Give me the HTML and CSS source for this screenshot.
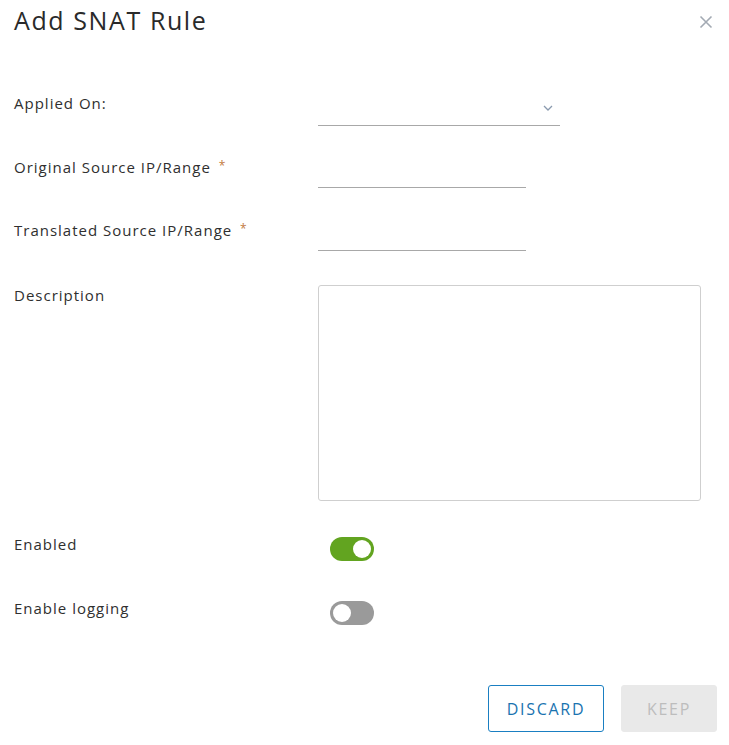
FILE: index.html
```html
<!DOCTYPE html>
<html lang="en">
<head>
<meta charset="utf-8">
<title>Add SNAT Rule</title>
<link rel="stylesheet" href="styles.css">
</head>
<body>
<div class="dialog">
  <div class="header">
    <h1 class="title">Add SNAT Rule</h1>
    <button class="close" aria-label="Close">
      <svg width="14" height="14" viewBox="0 0 14 14"><path d="M1.5 1.5 L12.5 12.5 M12.5 1.5 L1.5 12.5" stroke="#a3aab3" stroke-width="1.6" fill="none"/></svg>
    </button>
  </div>
  <form class="form">
    <div class="row row-select">
      <label class="label">Applied On:</label>
      <div class="field select">
        <svg class="chev" width="10" height="6" viewBox="0 0 10 6"><path d="M1 1 L5 5 L9 1" stroke="#8a9aae" stroke-width="1.3" fill="none"/></svg>
      </div>
    </div>
    <div class="row row-input">
      <label class="label">Original Source IP/Range <span class="req">*</span></label>
      <div class="field input"></div>
    </div>
    <div class="row row-input row-input2">
      <label class="label">Translated Source IP/Range <span class="req">*</span></label>
      <div class="field input"></div>
    </div>
    <div class="row row-desc">
      <label class="label">Description</label>
      <div class="textarea"></div>
    </div>
    <div class="row row-toggle">
      <label class="label">Enabled</label>
      <div class="toggle on"><span class="knob"></span></div>
    </div>
    <div class="row row-toggle row-toggle2">
      <label class="label">Enable logging</label>
      <div class="toggle"><span class="knob"></span></div>
    </div>
  </form>
  <div class="footer">
    <button class="btn btn-outline">DISCARD</button>
    <button class="btn btn-disabled">KEEP</button>
  </div>
</div>
</body>
</html>
```
FILE: styles.css
```css
* { box-sizing: border-box; }
html, body { margin: 0; padding: 0; background: #fff; }
body {
  font-family: "Open Sans", "Liberation Sans", sans-serif;
  color: #2f2f2f;
  width: 729px;
  height: 745px;
  overflow: hidden;
}
.dialog {
  padding: 0 12px 0 14px;
}
.header {
  display: flex;
  justify-content: space-between;
  align-items: flex-start;
  height: 95px;
}
.title {
  margin: 2px 0 0;
  font-size: 25px;
  font-weight: 400;
  line-height: 36px;
  color: #2a2a2a;
  letter-spacing: 1.6px;
}
.close {
  border: 0;
  background: none;
  padding: 0;
  margin: 15px 4px 0 0;
  width: 14px;
  height: 14px;
  display: flex;
}
.form {
  display: flex;
  flex-direction: column;
}
.row {
  display: grid;
  grid-template-columns: 304px auto;
  align-items: start;
}
.label {
  font-size: 15px;
  line-height: 18px;
  color: #2f2f2f;
  letter-spacing: 1px;
}
.row-select .label { margin-top: -1px; }
.req {
  color: #c27a3e;
  font-size: 12px;
  vertical-align: 3px;
  margin-left: 3px;
}
.field {
  height: 31px;
  border-bottom: 1px solid #a8a8a8;
}
.select {
  width: 242px;
  position: relative;
}
.chev {
  position: absolute;
  right: 7px;
  top: 10px;
}
.row-input { margin-top: 31px; }
.row-input2 { margin-top: 32px; }
.row-input .label { margin-top: 0; }
.input { width: 208px; }
.row-desc { margin-top: 34px; }
.row-desc .label { margin-top: 1px; }
.textarea {
  width: 383px;
  height: 216px;
  border: 1px solid #cfcfcf;
  border-radius: 3px;
}
.row-toggle { margin-top: 36px; }
.row-toggle .label { margin-top: -2px; }
.row-toggle2 { margin-top: 40px; }
.toggle {
  margin-left: 12px;
  width: 44px;
  height: 24px;
  border-radius: 12px;
  background: #9a9a9a;
  position: relative;
}
.toggle.on { background: #62a420; }
.knob {
  position: absolute;
  top: 3px;
  left: 3px;
  width: 18px;
  height: 18px;
  border-radius: 50%;
  background: #fff;
}
.toggle.on .knob { left: 23px; }
.footer {
  display: flex;
  justify-content: flex-end;
  gap: 17px;
  margin-top: 60px;
}
.btn {
  height: 47px;
  border-radius: 3px;
  font-family: "Open Sans", "Liberation Sans", sans-serif;
  font-size: 16px;
  font-weight: 500;
  letter-spacing: 1.7px;
  padding: 0;
}
.btn-outline {
  width: 116px;
  background: #fff;
  border: 1px solid #1a7fc2;
  color: #1a73b0;
}
.btn-disabled {
  width: 96px;
  background: #e9e9e9;
  border: 1px solid #e9e9e9;
  color: #bdbdbd;
}
```
